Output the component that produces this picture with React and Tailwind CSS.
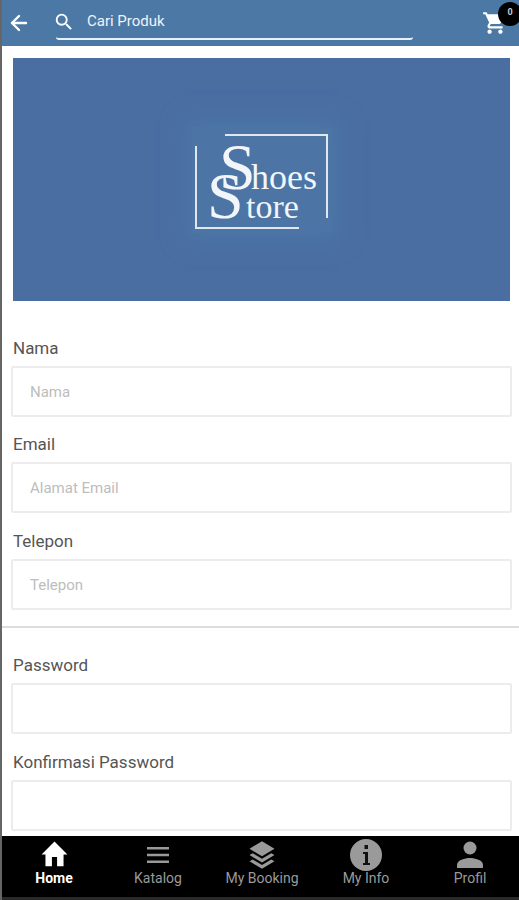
import React from "react";
import { ArrowLeft } from "lucide-react";

const Field = ({ label, placeholder }) => (
  <div>
    <label className="block pl-[2px] h-[35px] pt-[5px] text-[17px] leading-[24px] text-[#555]">{label}</label>
    <div className="h-[51px] flex items-center pl-[17px] pt-[2px] bg-white border-2 border-[#ececec] rounded-[2px] text-[15px] text-[#bdbdbd]">
      {placeholder}
    </div>
  </div>
);

const Logo = () => (
  <svg width="140" height="106" viewBox="0 0 140 106">
    <path d="M33 8H135V91M4 19V101H107" fill="none" stroke="#dfe7f0" strokeWidth="2" />
    <text x="27" y="62" fontFamily="Liberation Serif" fontSize="66" fill="#f2f5f9">S</text>
    <text x="15" y="91" fontFamily="Liberation Serif" fontSize="66" fill="#f2f5f9">S</text>
    <text x="59" y="62" fontFamily="Liberation Serif" fontSize="36" fill="#f2f5f9">hoes</text>
    <text x="54" y="91" fontFamily="Liberation Serif" fontSize="34" fill="#f2f5f9">tore</text>
  </svg>
);

const NavItem = ({ label, active, children }) => (
  <div className={`w-[104px] shrink-0 flex flex-col items-center ${active ? "text-white font-bold" : "text-[#9a9a9a]"}`}>
    <div className="h-[33px] flex items-center justify-center">{children}</div>
    <span className="mt-[-2px] text-[14px] leading-[18px]">{label}</span>
  </div>
);

export default function App() {
  return (
    <div className="w-[519px] h-[900px] overflow-hidden flex flex-col bg-white border-l-2 border-[#666] font-['Roboto',sans-serif]">
      <header className="h-[46px] shrink-0 bg-[#4c78a5] flex items-center text-white">
        <ArrowLeft size={24} strokeWidth={2.4} className="ml-[5px] mr-[25px]" />
        <div className="w-[357px] h-[36px] mt-[-7px] pt-[2px] flex items-center border-b-2 border-[#e8f1f8] rounded-b-[3px] relative top-[2px]">
          <svg width="22" height="22" viewBox="0 0 24 24" fill="white" className="ml-[-3px]">
            <path d="M15.500 14h-.79l-.28-.27A6.470 6.470 0 0 0 16 9.500 6.500 6.500 0 1 0 9.500 16c1.610 0 3.090-.59 4.230-1.570l.27.28v.79l5 4.990L20.490 19l-4.990-5zm-6 0C7.010 14 5 11.990 5 9.500S7.010 5 9.500 5 14 7.010 14 9.500 11.990 14 9.500 14z" />
          </svg>
          <span className="ml-[12px] text-[15px] text-[#eef3f8]">Cari Produk</span>
        </div>
        <div className="relative ml-[69px] w-[30px] h-[46px]">
          <svg width="26" height="26" viewBox="0 0 24 24" fill="white" className="absolute left-0 top-[10px]">
            <path d="M7 18c-1.100 0-2 .9-2 2s.9 2 2 2 2-.9 2-2-.9-2-2-2zM1 2v2h2l3.600 7.590-1.350 2.450c-.16.28-.25.61-.25.96 0 1.100.9 2 2 2h12v-2H7.420c-.14 0-.25-.11-.25-.25l.03-.12.9-1.630h7.450c.75 0 1.410-.41 1.750-1.030l3.580-6.490A1 1 0 0 0 20 4H5.210l-.94-2H1zm16 16c-1.100 0-2 .9-2 2s.9 2 2 2 2-.9 2-2-.9-2-2-2z" />
          </svg>
          <span className="absolute left-[16px] top-[2px] w-[24px] h-[24px] rounded-full bg-black flex items-start justify-center pt-[4px] text-[9px] leading-[12px] font-bold text-[#ccc]">0</span>
        </div>
      </header>

      <main className="flex-1 min-h-0 overflow-hidden">
        <div className="mt-[12px] ml-[11px] w-[497px] h-[243px] bg-[#4a6ea2] flex items-center justify-center">
          <div className="bg-[#4c75a5] shadow-[0_0_20px_8px_#4c75a5] w-[140px] h-[106px]">
            <Logo />
          </div>
        </div>

        <div className="mt-[30px] pl-[9px] pr-[7px]">
          <Field label="Nama" placeholder="Nama" />
          <div className="h-[10px]" />
          <Field label="Email" placeholder="Alamat Email" />
          <div className="h-[11px]" />
          <Field label="Telepon" placeholder="Telepon" />
        </div>

        <div className="mt-[16px] h-[2px] bg-[#dcdcdc]" />

        <div className="mt-[20px] pl-[9px] pr-[7px]">
          <Field label="Password" />
          <div className="h-[11px]" />
          <Field label="Konfirmasi Password" />
        </div>
      </main>

      <nav className="h-[64px] shrink-0 bg-black flex border-b-[3px] border-[#2a2a2a] pt-[2px]">
        <NavItem label="Home" active>
          <svg width="31" height="31" viewBox="0 0 24 24" fill="white"><path d="M10 21v-7h4v7h5v-9h3L12 2 2 12h3v9z" /></svg>
        </NavItem>
        <NavItem label="Katalog">
          <svg width="24" height="24" viewBox="0 0 24 24" fill="#9a9a9a"><path d="M1 4h22v2.400H1zM1 10.800h22v2.400H1zM1 17.600h22v2.400H1z" /></svg>
        </NavItem>
        <NavItem label="My Booking">
          <svg width="30" height="30" viewBox="0 0 24 24" fill="#9a9a9a"><path d="M12 1 2 7l10 6 10-6zM4.600 10.600 2 12l10 6 10-6-2.600-1.400L12 15zM4.600 15.600 2 17l10 6 10-6-2.600-1.400L12 20z" /></svg>
        </NavItem>
        <NavItem label="My Info">
          <svg width="32" height="32" viewBox="0 0 32 32"><circle cx="16" cy="16" r="16" fill="#9a9a9a" /><path d="M13 13h5v11h2v2h-7v-2h2v-9h-2zM14.500 6h3.500v4h-3.500z" fill="#111" /></svg>
        </NavItem>
        <NavItem label="Profil">
          <svg width="28" height="30" viewBox="0 0 28 30" fill="#9a9a9a"><circle cx="14" cy="8" r="6.500" /><path d="M1 28v-3c0-5 8-7 13-7s13 2 13 7v3z" /></svg>
        </NavItem>
      </nav>
    </div>
  );
}
